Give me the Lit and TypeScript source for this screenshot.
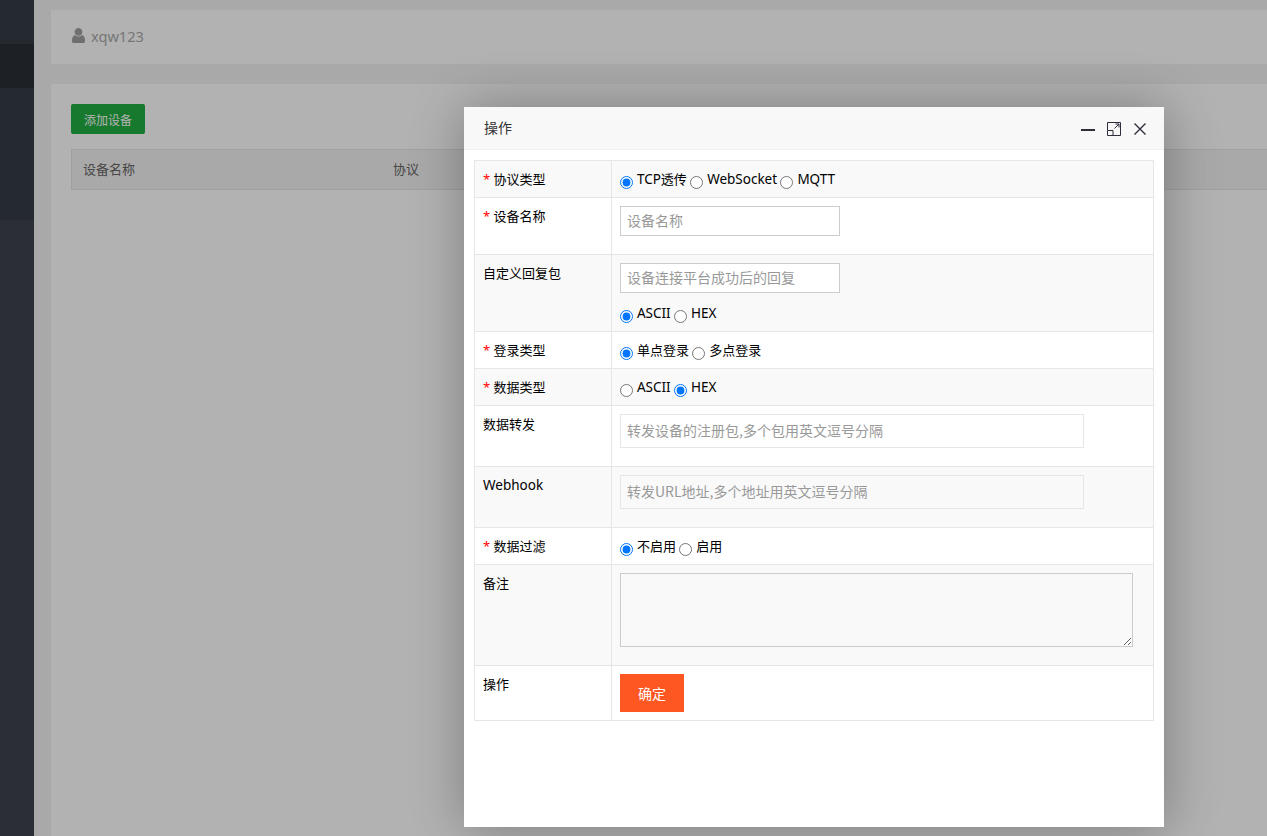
import { LitElement, html, css } from "lit";
import { customElement } from "lit/decorators.js";

const FONT = css`"Noto Sans CJK SC", "Noto Sans", sans-serif`;

@customElement("app-root")
export class AppRoot extends LitElement {
  static styles = css`
    :host { display: block; height: 836px; overflow: hidden; position: relative; font-family: "Noto Sans", "Noto Sans CJK SC", sans-serif; font-size: 14px; }
    * { box-sizing: border-box; }
    .page { display: flex; height: 836px; background: #f2f2f2; }
    .side { width: 34px; flex: none; display: flex; flex-direction: column; background: #3c4148; }
    .s1 { height: 44px; background: #363d45; }
    .s2 { height: 44px; background: #2a2f35; }
    .s3 { height: 132px; background: #363d45; }
    .s4 { flex: 1; background: #3e4350; }
    .main { flex: 1; min-width: 0; padding: 10px 0 0 17px; display: flex; flex-direction: column; gap: 20px; }
    .head { height: 54px; background: #fff; padding: 0 0 3px 21px; display: flex; align-items: center; gap: 6px; color: #aaa; font-size: 14.6px; }
    .head svg { width: 13px; height: 15.600px; fill: #a0a0a0; }
    .card { flex: 1; background: #fff; padding: 20px 0 0 20px; }
    .add { width: 74px; height: 30px; padding-top: 1px; border-radius: 2px; background: #21ae41; color: #fff; font-size: 12px; display: flex; align-items: center; justify-content: center; }
    .thead { margin-top: 15px; height: 41px; padding-bottom: 2px; background: #f2f2f2; border: 1px solid #e6e6e6; border-right: 0; display: flex; align-items: center; color: #666; font-size: 13px; }
    .thead span:first-child { width: 321px; padding-left: 11px; }
    .shade { position: absolute; inset: 0; background: rgba(0,0,0,.3); }
    .modal { position: absolute; left: 464px; top: 107px; width: 700px; height: 720px; background: #fff; box-shadow: 1px 1px 50px rgba(0,0,0,.3); color: #000; }
    .title { height: 43px; background: #f8f8f8; border-bottom: 1px solid #f0f0f0; padding: 0 17px 2px 20px; display: flex; align-items: center; justify-content: space-between; color: #333; }
    .tools { display: flex; align-items: center; gap: 12px; margin-top: 4px; }
    .tools svg { width: 14px; height: 14px; display: block; fill: none; stroke: #2e2d3c; }
    .body { padding: 10px; }
    table { width: 680px; border-collapse: collapse; table-layout: fixed; font-size: 13px; }
    td { border: 1px solid #e6e6e6; padding: 8px; vertical-align: top; line-height: 20px; }
    td:first-child { width: 137px; }
    tr:nth-child(odd) { background: #f9f9f9; }
    .req { color: #f00; }
    .lat { font-size: 13.500px; }
    .inp { display: block; border: 1px solid #ccc; height: 30px; width: 220px; padding: 0 6px 2px; margin: 0 0 10px; font: 14px ${FONT}; background: #fff; outline: 0; }
    .wide { border-color: #e6e6e6; height: 34px; width: 464px; background: #fff; }
    tr:nth-child(odd) .wide { background: #f9f9f9; }
    input::placeholder { color: #999; opacity: 1; }
    textarea { display: block; width: 513px; height: 74px; margin: 0 0 10px; border: 1px solid #ccc; background: #f9f9f9; outline: 0; font: 14px ${FONT}; }
    input[type="radio"] { margin: 0 .5px 0 0; width: 13px; height: 13px; vertical-align: -3px; transform: translateY(2px); }
    .go { display: block; width: 64px; height: 38px; border: 0; background: #ff5722; color: #fff; font: 14px ${FONT}; margin: 0; padding: 0; }
  `;

  private text(s: string) {
    return s.split(/([A-Za-z]+)/).map((p) => (/^[A-Za-z]+$/.test(p) ? html`<span class="lat">${p}</span>` : p));
  }

  private radios(name: string, opts: string[], on: number) {
    return opts.map((o, i) => html`<input type="radio" name=${name} ?checked=${i === on} /> ${this.text(o)} `);
  }

  render() {
    return html`
      <div class="page">
        <div class="side"><div class="s1"></div><div class="s2"></div><div class="s3"></div><div class="s4"></div></div>
        <div class="main">
          <div class="head">
            <svg viewBox="256 128 1280 1536"><path d="M1536 1399q0 109-62.500 187t-150.500 78h-854q-88 0-150.500-78t-62.500-187q0-85 8.500-160.500t31.500-152 58.500-131 94-89 134.500-34.500q131 128 313 128t313-128q76 0 134.500 34.500t94 89 58.500 131 31.500 152 8.500 160.500zm-256-887q0 159-112.500 271.500t-271.500 112.500-271.500-112.500-112.500-271.500 112.500-271.500 271.500-112.500 271.500 112.500 112.500 271.500z"/></svg>
            <span>xqw123</span>
          </div>
          <div class="card">
            <div class="add">添加设备</div>
            <div class="thead"><span>设备名称</span><span>协议</span></div>
          </div>
        </div>
      </div>
      <div class="shade"></div>
      <div class="modal">
        <div class="title">
          <span>操作</span>
          <div class="tools">
            <svg viewBox="0 0 14 14"><path d="M0 8h14" stroke-width="2"/></svg>
            <svg viewBox="0 0 14 14"><path d="M.5 8V.5h13v13H6M.5 8.500H6V13.500H.5zM7.500 6.500L12 2M8.500 2H12V5.500"/></svg>
            <svg viewBox="0 0 14 14"><path d="M1.500 1.500l11 11M12.500 1.500l-11 11" stroke-width="1.400"/></svg>
          </div>
        </div>
        <div class="body">
          <table><tbody>
            <tr><td><span class="req">*</span> 协议类型</td><td>${this.radios("a", ["TCP透传", "WebSocket", "MQTT"], 0)}</td></tr>
            <tr><td><span class="req">*</span> 设备名称</td><td><input class="inp" placeholder="设备名称" /></td></tr>
            <tr><td>自定义回复包</td><td><input class="inp" placeholder="设备连接平台成功后的回复" />${this.radios("b", ["ASCII", "HEX"], 0)}</td></tr>
            <tr><td><span class="req">*</span> 登录类型</td><td>${this.radios("c", ["单点登录", "多点登录"], 0)}</td></tr>
            <tr><td><span class="req">*</span> 数据类型</td><td>${this.radios("d", ["ASCII", "HEX"], 1)}</td></tr>
            <tr><td>数据转发</td><td><input class="inp wide" placeholder="转发设备的注册包,多个包用英文逗号分隔" /></td></tr>
            <tr><td><span class="lat">Webhook</span></td><td><input class="inp wide" placeholder="转发URL地址,多个地址用英文逗号分隔" /></td></tr>
            <tr><td><span class="req">*</span> 数据过滤</td><td>${this.radios("e", ["不启用", "启用"], 0)}</td></tr>
            <tr><td>备注</td><td><textarea></textarea></td></tr>
            <tr><td>操作</td><td><button class="go">确定</button></td></tr>
          </tbody></table>
        </div>
      </div>
    `;
  }
}
